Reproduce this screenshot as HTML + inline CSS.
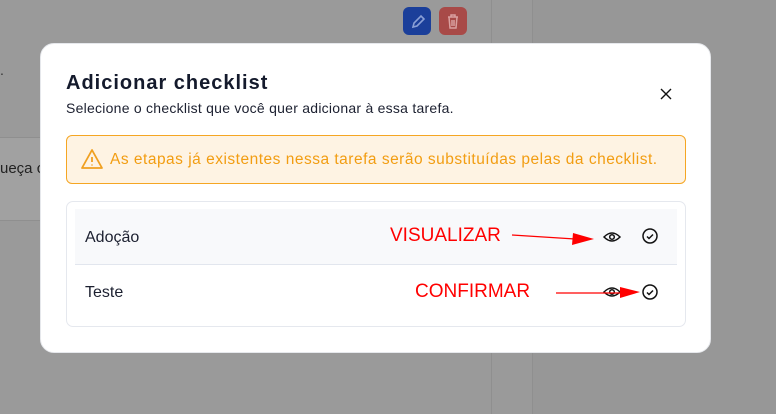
<!DOCTYPE html><html><head><style>
body{margin:0;width:776px;height:414px;background:#9a9a9a;position:relative;overflow:hidden;font-family:"Liberation Sans",sans-serif}
.a{position:absolute}
</style></head><body>
<div class="a" style="left:491px;top:0;width:1px;height:414px;background:#8f8f8f"></div>
<div class="a" style="left:532px;top:0;width:1px;height:414px;background:#8f8f8f"></div>
<div class="a" style="left:533px;top:0;width:243px;height:414px;background:#979797"></div>
<div class="a" style="left:0;top:137px;width:40px;height:82px;background:#a1a1a1;border-top:1px solid #8f8f8f;border-bottom:1px solid #8f8f8f"></div>
<div class="a" style="left:0;top:160px;font-size:15px;color:#222">ueça c</div>
<div class="a" style="left:0;top:62px;font-size:14px;color:#333">.</div>
<div class="a" style="left:403px;top:7px;width:28px;height:28px;background:#1b3f9a;border-radius:6px"><svg width="28" height="28"><path d="M10 20l1-4 7-7 3 3-7 7z" fill="none" stroke="#8aa0d6" stroke-width="1.6"/></svg></div>
<div class="a" style="left:439px;top:7px;width:28px;height:28px;background:#a84a48;border-radius:6px"><svg width="28" height="28"><path d="M9 10h10M12 10V8h4v2M10 10l1 11h6l1-11M13 13v6M15 13v6" fill="none" stroke="#d9a09f" stroke-width="1.5"/></svg></div>
<div class="a" style="left:40px;top:43px;width:671px;height:310px;background:#fff;border-radius:14px;border:1px solid #e6e8ec;box-sizing:border-box"></div>
<div class="a" style="left:66px;top:72px;font-size:20px;font-weight:bold;color:#141a2c;letter-spacing:1px">Adicionar checklist</div>
<div class="a" style="left:66px;top:100px;font-size:14px;color:#1c2030;letter-spacing:0.25px">Selecione o checklist que você quer adicionar à essa tarefa.</div>
<svg class="a" style="left:658px;top:86px" width="16" height="16"><path d="M3 3l10 10M13 3L3 13" stroke="#111" stroke-width="1.4"/></svg>
<div class="a" style="left:66px;top:135px;width:620px;height:49px;background:#fef3e3;border:1px solid #f5a623;border-radius:6px;box-sizing:border-box"></div>
<svg class="a" style="left:80px;top:147px" width="24" height="24"><path d="M12 3L2 21h20z" fill="none" stroke="#f0a020" stroke-width="1.8" stroke-linejoin="round"/><path d="M12 10v5M12 17.5v1" stroke="#f0a020" stroke-width="1.8"/></svg>
<div class="a" style="left:110px;top:151px;font-size:15.5px;color:#f29d12;letter-spacing:0.5px">As etapas já existentes nessa tarefa serão substituídas pelas da checklist.</div>
<div class="a" style="left:66px;top:201px;width:620px;height:126px;border:1px solid #e5e8ee;border-radius:7px;box-sizing:border-box"></div>
<div class="a" style="left:75px;top:209px;width:602px;height:55px;background:#f8f9fb;border-bottom:1px solid #e2e6ee"></div>
<div class="a" style="left:85px;top:229px;font-size:16px;color:#1c2030">Adoção</div>
<div class="a" style="left:85px;top:284px;font-size:16px;color:#1c2030">Teste</div>
<div class="a" style="left:390px;top:225px;font-size:19px;color:#f00">VISUALIZAR</div>
<div class="a" style="left:415px;top:281px;font-size:19px;color:#f00">CONFIRMAR</div>
<svg class="a" style="left:0;top:0" width="776" height="414">
<g fill="none" stroke="#111" stroke-width="1.5">
<path d="M604 237q8-8 16 0q-8 8-16 0z"/><circle cx="612" cy="237" r="2.3"/>
<circle cx="650" cy="236" r="7"/><path d="M647 236.5l2 2 4-4"/>
<path d="M604 292q8-8 16 0q-8 8-16 0z"/><circle cx="612" cy="292" r="2.3"/>
<circle cx="650" cy="292" r="7"/><path d="M647 292.5l2 2 4-4"/>
</g>
<path d="M512 235L575 239" stroke="#f00" stroke-width="1.3"/><path d="M573 233L594 239L572 245z" fill="#f00"/>
<path d="M556 293L622 293" stroke="#f00" stroke-width="1.3"/><path d="M620 287L640 292L620 298z" fill="#f00"/>
</svg>
</body></html>
